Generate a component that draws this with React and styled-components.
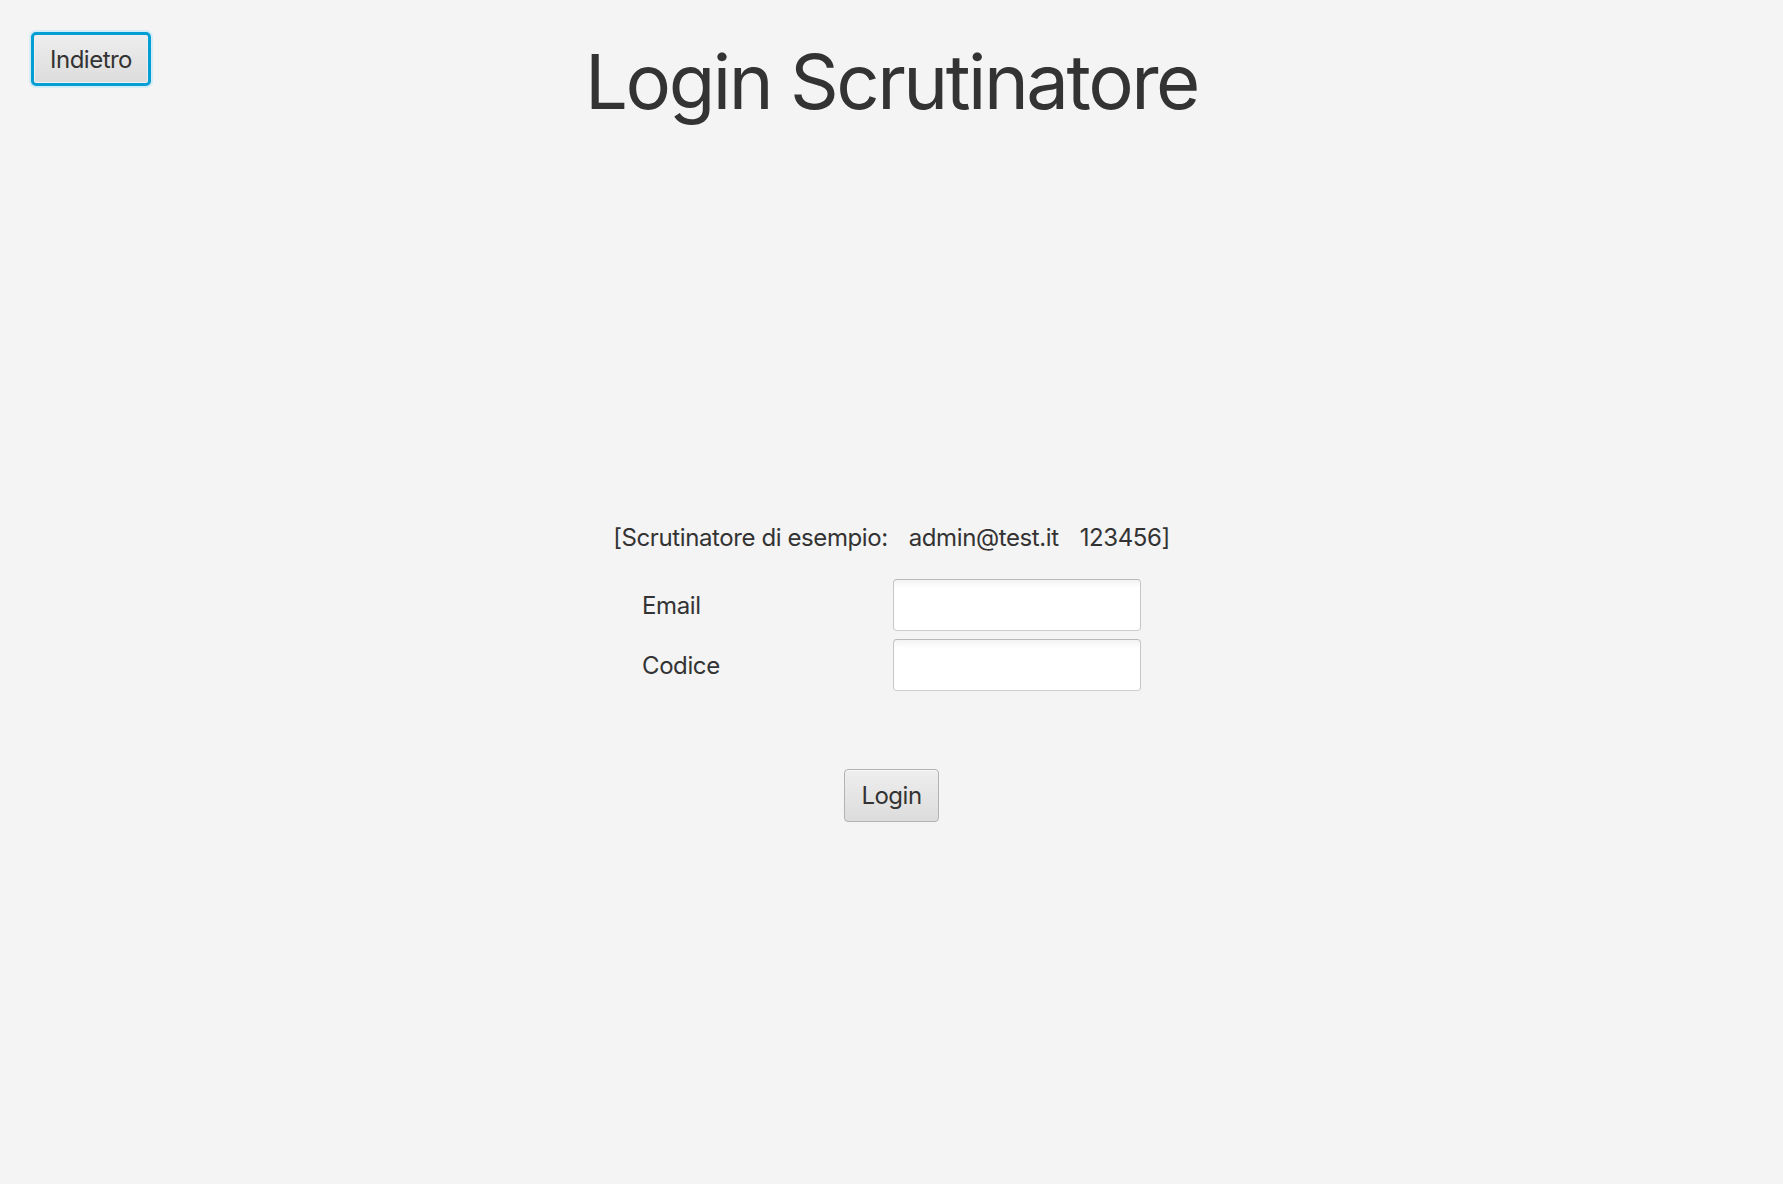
import styled, { createGlobalStyle } from "styled-components";

const GlobalStyle = createGlobalStyle`
  html, body {
    margin: 0;
    padding: 0;
    background: #f4f4f4;
  }
  * {
    box-sizing: border-box;
  }
`;

// riga di esempio con le credenziali di prova
const SAMPLE = ["[Scrutinatore di esempio:", "admin@test.it", "123456]"];

const FIELDS = ["Email", "Codice"];

const App = () => {
  return (
    <S.Page>
      <GlobalStyle />
      <S.Header>
        <S.BackButton $focused>Indietro</S.BackButton>
        <S.Title>Login Scrutinatore</S.Title>
      </S.Header>

      <S.Main>
        <S.Sample>
          {SAMPLE.map((part) => (
            <span key={part}>{part}</span>
          ))}
        </S.Sample>
        <S.Form>
          {FIELDS.map((name) => (
            <S.Row key={name}>
              <S.Label>{name}</S.Label>
              <S.Input type="text" />
            </S.Row>
          ))}
        </S.Form>
        <S.Button>Login</S.Button>
      </S.Main>
    </S.Page>
  );
};
export default App;

const Page = styled.div`
  min-height: 100vh;
  background: #f4f4f4;
  color: #333333;
  font-family: Inter, "Liberation Sans", sans-serif;
`;

// 1fr auto 1fr -> il titolo resta al centro della pagina
const Header = styled.header`
  display: grid;
  grid-template-columns: 1fr auto 1fr;
  align-items: start;
  padding-top: 32px;
`;

const Button = styled.button`
  height: 53px;
  padding: 0 16px;
  font-family: inherit;
  font-size: 24px;
  letter-spacing: -0.5px;
  color: #333333;
  border-radius: 4px;
  cursor: pointer;
  background: linear-gradient(#eeeeee, #dcdcdc);
  border: 1px solid #b2b2b2;
  box-shadow: inset 0 1px 0 #f9f9f9;

  ${(props) =>
    props.$focused &&
    `
    height: 54px;
    border: 3px solid #039ed3;
    border-radius: 5px;
    box-shadow: 0 0 0 2px #d4ecf6, inset 0 0 0 1px #f0f0f0;
  `}
`;

const BackButton = styled(Button)`
  justify-self: start;
  margin-left: 31px;
`;

const Title = styled.h1`
  grid-column: 2;
  margin: 9px 0 0 0;
  font-size: 76px;
  font-weight: 400;
  line-height: 80px;
  letter-spacing: -2.5px;
  color: #333333;
`;

const Main = styled.main`
  display: flex;
  flex-direction: column;
  align-items: center;
  margin-top: 403px;
`;

const Sample = styled.div`
  display: flex;
  gap: 21px;
  font-size: 24px;
  line-height: 28px;
  letter-spacing: -0.4px;
`;

const Form = styled.div`
  display: flex;
  flex-direction: column;
  gap: 8px;
  margin-top: 27px;
  margin-bottom: 78px;
`;

const Row = styled.div`
  display: grid;
  grid-template-columns: 251px 248px;
  align-items: center;
`;

const Label = styled.label`
  font-size: 24px;
  letter-spacing: -0.4px;
`;

const Input = styled.input`
  height: 52px;
  width: 248px;
  border: 1px solid #c6c6c6;
  border-top-color: #b9b9b9;
  border-bottom-color: #cecece;
  border-radius: 4px;
  background: linear-gradient(#f3f3f3, #ffffff 8px);
  outline: none;
  font-family: inherit;
  font-size: 22px;
  padding: 0 10px;
`;

const S = {
  Page,
  Header,
  Button,
  BackButton,
  Title,
  Main,
  Sample,
  Form,
  Row,
  Label,
  Input,
};
